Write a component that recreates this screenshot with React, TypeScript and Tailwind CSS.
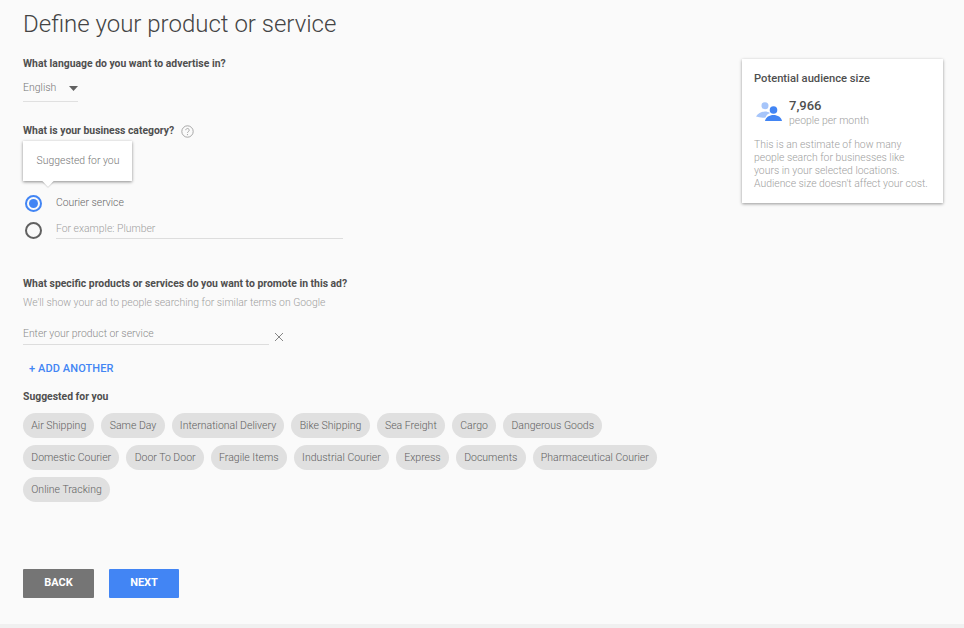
const row1 = ["Air Shipping", "Same Day", "International Delivery", "Bike Shipping", "Sea Freight", "Cargo", "Dangerous Goods"];
const row2 = ["Domestic Courier", "Door To Door", "Fragile Items", "Industrial Courier", "Express", "Documents", "Pharmaceutical Courier"];
const row3 = ["Online Tracking"];

function Chips({ items }: { items: string[] }) {
  return (
    <div className="flex gap-[7px]">
      {items.map((t) => (
        <span key={t} className="h-[25px] px-[8.25px] rounded-full bg-[#e0e0e0] text-[10.5px] leading-[25px] font-light text-[#5f5f5f] whitespace-nowrap">
          {t}
        </span>
      ))}
    </div>
  );
}

export default function App() {
  return (
    <div className="w-[964px] h-[628px] overflow-hidden bg-[#fafafa] flex flex-col font-['Roboto',sans-serif]">
      <div className="flex-1 flex justify-between pl-[23px] pr-[21px]">
        <div className="flex flex-col">
          <h1 className="mt-[9px] text-[24px] leading-[30px] font-light text-[#444444]">Define your product or service</h1>
          <p className="mt-[18px] text-[10.4px] leading-[14px] font-bold text-[#4f4f4f]">What language do you want to advertise in?</p>
          <div className="mt-[9px] w-[55px] h-[15px] box-content pb-[6px] border-b border-[#e0e0e0] flex items-center justify-between">
            <span className="text-[10.5px] leading-[15px] font-light text-[#757575]">English</span>
            <svg width="9" height="5" viewBox="0 0 9 5" className="mt-[1px]"><path d="M0 0h9L4.5 5z" fill="#616161" /></svg>
          </div>
          <div className="mt-[22px] flex items-center gap-[7px]">
            <p className="text-[10.4px] leading-[14px] font-bold text-[#4f4f4f]">What is your business category?</p>
            <svg width="13" height="13" viewBox="0 0 13 13" fill="none">
              <circle cx="6.5" cy="6.5" r="5.7" stroke="#9e9e9e" strokeWidth="0.9" />
              <path d="M4.8 5.2a1.7 1.7 0 1 1 2.6 1.4c-.6.4-.9.7-.9 1.3" stroke="#9e9e9e" strokeWidth="0.9" />
              <circle cx="6.5" cy="9.600" r="0.6" fill="#9e9e9e" />
            </svg>
          </div>
          <div className="relative mt-[3px] w-[109px] h-[40px] bg-white shadow-[0_1px_3px_rgba(0,0,0,0.45)] flex items-center justify-center pl-[1px]">
            <span className="text-[10.4px] font-light text-[#757575]">Suggested for you</span>
            <span className="absolute left-[21px] top-[36px] w-[8px] h-[8px] rotate-45 bg-white shadow-[1px_1px_1px_rgba(0,0,0,0.12)]" />
          </div>
          <div className="mt-[13px] flex items-center h-[18px]">
            <span className="ml-[2px] w-[17px] h-[17px] rounded-full border-[2px] border-[#4285f4] flex items-center justify-center">
              <span className="w-[9px] h-[9px] rounded-full bg-[#4285f4]" />
            </span>
            <span className="ml-[14px] text-[10.4px] font-light text-[#666666]">Courier service</span>
          </div>
          <div className="mt-[9px] flex items-start">
            <span className="ml-[2px] mt-[1px] w-[17px] h-[17px] rounded-full border-[2px] border-[#616161]" />
            <span className="ml-[14px] w-[287px] h-[18px] border-b border-[#dddddd] text-[10.4px] leading-[15px] font-light text-[#9e9e9e]">For example: Plumber</span>
          </div>
          <p className="mt-[38px] text-[10.4px] leading-[14px] font-bold text-[#4f4f4f]">What specific products or services do you want to promote in this ad?</p>
          <p className="mt-[5px] text-[10.4px] leading-[14px] font-light text-[#9e9e9e]">We'll show your ad to people searching for similar terms on Google</p>
          <div className="mt-[17px] flex items-end">
            <div className="w-[246px] h-[18px] border-b border-[#dddddd] text-[10.4px] leading-[14px] font-light text-[#8a8a8a]">Enter your product or service</div>
            <svg width="10" height="10" viewBox="0 0 10 10" className="ml-[5px] mb-[3px]"><path d="M1 1l8 8M9 1l-8 8" stroke="#858585" strokeWidth="1" /></svg>
          </div>
          <p className="mt-[17px] ml-[6px] text-[11px] leading-[14px] font-medium text-[#4285f4] tracking-[0.1px]">+ ADD ANOTHER</p>
          <p className="mt-[14px] text-[10.4px] leading-[14px] font-bold text-[#4f4f4f]">Suggested for you</p>
          <div className="mt-[9px] flex flex-col gap-[7px]">
            <Chips items={row1} />
            <Chips items={row2} />
            <Chips items={row3} />
          </div>
          <div className="mt-[67px] flex gap-[15px]">
            <button className="w-[71px] h-[29px] rounded-[1px] bg-[#757575] text-white text-[11px] font-bold">BACK</button>
            <button className="w-[70px] h-[29px] rounded-[1px] bg-[#4285f4] text-white text-[11px] font-bold">NEXT</button>
          </div>
        </div>
        <aside className="mt-[59px] w-[201px] h-[144px] bg-white shadow-[0_1px_3px_rgba(0,0,0,0.4)] px-[12px] pt-[12px]">
          <p className="text-[11.2px] leading-[15px] font-medium text-[#4f4f4f]">Potential audience size</p>
          <div className="mt-[12px] flex items-start">
            <svg width="27" height="20" viewBox="0 0 27 20" className="mt-[4px] ml-[2px]">
              <circle cx="9" cy="3.700" r="3.500" fill="#a6c5fa" />
              <path d="M0 14.500c2-3 6-5 9-5 2 0 3.500.5 5 1.500-2 .8-3.500 1.800-4.500 4.500C6 16 3 15.500 0 14.500z" fill="#a6c5fa" />
              <circle cx="17.500" cy="8" r="3.800" fill="#4285f4" />
              <path d="M9 19c.5-3.800 4.500-6 8.500-6s8 2.200 8.500 6z" fill="#4285f4" />
            </svg>
            <div className="ml-[6px]">
              <p className="text-[13px] leading-[15px] font-medium text-[#4f4f4f]">7,966</p>
              <p className="mt-[1px] text-[10.4px] leading-[13px] font-light text-[#9e9e9e]">people per month</p>
            </div>
          </div>
          <p className="mt-[11px] text-[10.4px] leading-[13px] font-light text-[#a0a0a0] whitespace-nowrap">
            This is an estimate of how many<br />people search for businesses like<br />yours in your selected locations.<br />Audience size doesn't affect your cost.
          </p>
        </aside>
      </div>
      <div className="h-[4px] bg-[#f0f0f0]" />
    </div>
  );
}
